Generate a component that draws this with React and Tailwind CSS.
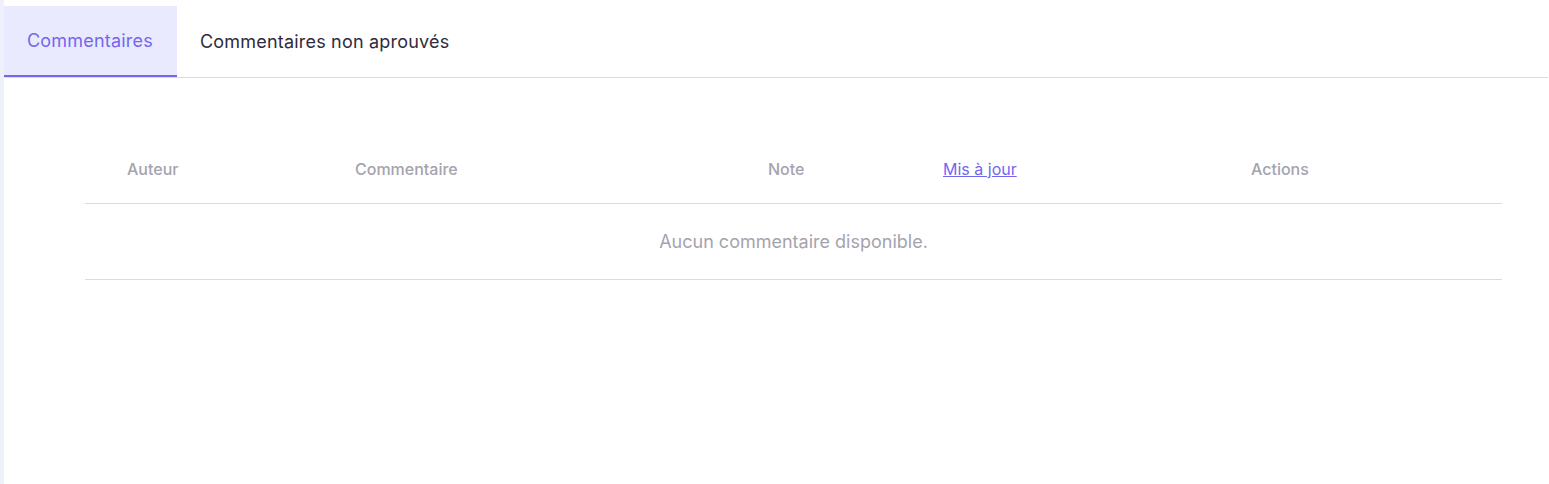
import React, { useState } from 'react'

const columns = [
  { label: 'Auteur', w: 'w-[228px]' },
  { label: 'Commentaire', w: 'w-[413px]' },
  { label: 'Note', w: 'w-[175px]' },
  { label: 'Mis à jour', w: 'w-[308px]', link: true },
  { label: 'Actions', w: 'w-[293px]' },
]

const App = () => {
  const [tab, setTab] = useState(0)
  const tabs = ['Commentaires', 'Commentaires non aprouvés']

  return (
    <div className="min-h-[484px] flex bg-white font-['Inter',sans-serif]">
      <div className="w-[4px] bg-[#eef1f9] shrink-0" />
      <div className="flex-1 pt-[6px]">
        <div className="flex border-b border-[#dbdade] mr-[1px]">
          {tabs.map((t, i) => (
            <button
              key={t}
              onClick={() => setTab(i)}
              className={
                i === tab
                  ? 'pl-[23px] pr-[24px] h-[71px] text-[18px] tracking-[0.2px] text-[#7367f0] bg-[#eaeafe] border-b-2 border-[#7367f0] -mb-px'
                  : 'pl-[23px] pr-[24px] h-[71px] text-[18px] tracking-[0.2px] text-[#2f2b3d]'
              }
            >
              {t}
            </button>
          ))}
        </div>

        <div className="ml-[81px] w-[1417px] mt-[55px]">
          <div className="flex h-[71px] pt-[1px] items-center border-b border-[#dbdade]">
            {columns.map(c => (
              <div key={c.label} className={`${c.w} pl-[42px] text-[16px] font-medium`}>
                {c.link ? (
                  <a href="#" className="text-[#7367f0] underline font-normal">{c.label}</a>
                ) : (
                  <span className="text-[#a5a3ae]">{c.label}</span>
                )}
              </div>
            ))}
          </div>
          <div className="h-[76px] pb-[1px] flex items-center justify-center border-b border-[#dbdade] text-[18px] text-[#a5a3ae]">
            Aucun commentaire disponible.
          </div>
        </div>
      </div>
    </div>
  )
}

export default App
